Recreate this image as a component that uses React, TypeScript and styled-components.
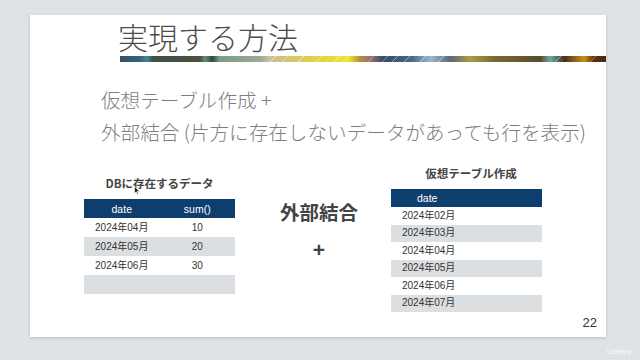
import React from 'react';
import styled, { createGlobalStyle } from 'styled-components';

const GlobalStyle = createGlobalStyle`
    html, body {
        margin: 0;
        padding: 0;
    }
    body {
        width: 640px;
        height: 360px;
        overflow: hidden;
        background: #dde3e7;
        font-family: "Noto Sans CJK JP", "Noto Sans", sans-serif;
    }
`;

const Stage = styled.div`
    position: relative;
    width: 640px;
    height: 360px;
    padding: 15px 0 0 30px;
    box-sizing: border-box;
`;

const Slide = styled.section`
    position: relative;
    width: 576px;
    height: 322px;
    background: #ffffff;
    box-shadow: 0 1px 3px rgba(0, 0, 0, 0.18);
    display: flex;
    flex-direction: column;
`;

const SlideTitle = styled.h1`
    margin: 0;
    padding: 3px 0 0 88px;
    font-size: 30px;
    line-height: 36px;
    font-weight: 300;
    color: #4d4d4d;
`;

const StripeWrap = styled.div`
    margin: 2px 0 0 90px;
    height: 6px;

    svg {
        display: block;
        width: 100%;
        height: 100%;
    }
`;

const Bullets = styled.ul`
    list-style: none;
    margin: 22px 0 0;
    padding: 0 0 0 71px;
`;

const Bullet = styled.li`
    font-size: 19.6px;
    line-height: 32px;
    font-weight: 300;
    color: #7d7d7d;
    white-space: nowrap;
`;

const ContentRow = styled.div`
    display: flex;
    align-items: flex-start;
    padding-left: 54px;
`;

const TableColumn = styled.div<{ $top: number }>`
    margin-top: ${(p) => p.$top}px;
    width: 151px;
    display: flex;
    flex-direction: column;
`;

const TableCaption = styled.div<{ $shift?: number }>`
    text-align: center;
    font-size: 11.5px;
    line-height: 16px;
    font-weight: 700;
    color: #444;
    margin-bottom: 8px;
    padding-left: ${(p) => p.$shift ?? 0}px;
    white-space: nowrap;
`;

const JoinColumn = styled.div`
    margin: 51px 33px 0 45px;
    width: 78px;
    display: flex;
    flex-direction: column;
    align-items: center;
    color: #444;
`;

const JoinLabel = styled.div`
    font-size: 19.5px;
    line-height: 26px;
    font-weight: 700;
    white-space: nowrap;
`;

const JoinPlus = styled.div`
    margin-top: 13px;
    font-family: "Liberation Sans", sans-serif;
    font-size: 21px;
    line-height: 24px;
    font-weight: 700;
`;

const DataTable = styled.table`
    width: 151px;
    border-collapse: collapse;
    table-layout: fixed;
    font-family: "Liberation Sans", "Noto Sans CJK JP", sans-serif;
`;

const HeadCell = styled.th<{ $align: 'center' | 'left'; $pad: number; $h: number }>`
    background: #0e3e6d;
    color: #ffffff;
    font-weight: 400;
    font-size: 10.5px;
    line-height: 12px;
    height: ${(p) => p.$h}px;
    padding: 0 0 0 ${(p) => p.$pad}px;
    text-align: ${(p) => p.$align};
`;

const BodyRow = styled.tr<{ $shaded: boolean }>`
    background: ${(p) => (p.$shaded ? '#dcdfe2' : '#ffffff')};
`;

const BodyCell = styled.td<{ $align: 'center' | 'left'; $pad: number; $h: number }>`
    font-size: 10px;
    line-height: 12px;
    color: #333;
    height: ${(p) => p.$h}px;
    padding: 0 0 0 ${(p) => p.$pad}px;
    text-align: ${(p) => p.$align};
    white-space: nowrap;
`;

const Footer = styled.div`
    margin-top: auto;
    padding: 0 9px 6px 0;
    text-align: right;
    font-family: "Liberation Sans", sans-serif;
    font-size: 13px;
    line-height: 16px;
    color: #333;
`;

const Cursor = styled.svg`
    position: absolute;
    left: 104px;
    top: 171px;
    width: 6px;
    height: 9px;
`;

const Watermark = styled.div`
    position: absolute;
    right: 8px;
    bottom: 4px;
    font-family: "Liberation Sans", sans-serif;
    font-size: 8px;
    color: rgba(255, 255, 255, 0.85);
`;

const stripeStops: [number, string][] = [
    [0, '#35506a'],
    [0.04, '#3a6078'],
    [0.055, '#3a8aa0'],
    [0.068, '#404e48'],
    [0.165, '#4a5040'],
    [0.175, '#6a8a78'],
    [0.19, '#2d4a3c'],
    [0.205, '#7f9a8a'],
    [0.29, '#98aa98'],
    [0.305, '#c8c098'],
    [0.37, '#d8c860'],
    [0.43, '#e8d840'],
    [0.47, '#f0e430'],
    [0.495, '#b88a40'],
    [0.515, '#a07070'],
    [0.54, '#3a4a68'],
    [0.6, '#4a6888'],
    [0.64, '#9ab8c8'],
    [0.68, '#5a6878'],
    [0.72, '#a8a040'],
    [0.77, '#7a6a30'],
    [0.865, '#5a4a30'],
    [0.885, '#70a8a8'],
    [0.915, '#4a3018'],
    [0.955, '#c89020'],
    [0.975, '#5a3010'],
    [1, '#4a2a10'],
];

const streaks: { x: number; c: string }[] = [
    { x: 150, c: '#ffffff' },
    { x: 162, c: '#f8f0c0' },
    { x: 178, c: '#ffffff' },
    { x: 196, c: '#fff8a0' },
    { x: 214, c: '#ffffff' },
    { x: 248, c: '#e8b0b0' },
    { x: 262, c: '#a8d0f0' },
    { x: 272, c: '#a8d0f0' },
    { x: 284, c: '#c0e0f0' },
    { x: 300, c: '#ffffff' },
    { x: 318, c: '#e0f0f8' },
    { x: 435, c: '#a0e0e0' },
    { x: 470, c: '#f0b030' },
];

const Stripe = () => (
    <svg viewBox="0 0 486 6" preserveAspectRatio="none">
        <defs>
            <linearGradient id="stripe" x1="0" x2="1" y1="0" y2="0">
                {stripeStops.map(([o, c]) => (
                    <stop key={o} offset={o} stopColor={c} />
                ))}
            </linearGradient>
        </defs>
        <rect width="486" height="6" fill="url(#stripe)" />
        {streaks.map((s) => (
            <line key={s.x} x1={s.x} y1="6" x2={s.x + 6} y2="0" stroke={s.c} strokeWidth="1" opacity="0.6" />
        ))}
    </svg>
);

const dbRows = [
    { date: '2024年04月', sum: '10' },
    { date: '2024年05月', sum: '20' },
    { date: '2024年06月', sum: '30' },
    { date: '', sum: '' },
];

const virtualRows = ['2024年02月', '2024年03月', '2024年04月', '2024年05月', '2024年06月', '2024年07月'];

export default function App() {
    return (
        <Stage>
            <GlobalStyle />
            <Slide>
                <SlideTitle>実現する方法</SlideTitle>
                <StripeWrap>
                    <Stripe />
                </StripeWrap>
                <Bullets>
                    <Bullet>仮想テーブル作成 +</Bullet>
                    <Bullet>外部結合 (片方に存在しないデータがあっても行を表示)</Bullet>
                </Bullets>
                <ContentRow>
                    <TableColumn $top={27}>
                        <TableCaption>DBに存在するデータ</TableCaption>
                        <DataTable>
                            <thead>
                                <tr>
                                    <HeadCell $align="center" $pad={0} $h={19}>date</HeadCell>
                                    <HeadCell $align="center" $pad={0} $h={19}>sum()</HeadCell>
                                </tr>
                            </thead>
                            <tbody>
                                {dbRows.map((r, i) => (
                                    <BodyRow key={i} $shaded={i % 2 === 1}>
                                        <BodyCell $align="center" $pad={0} $h={19}>{r.date}</BodyCell>
                                        <BodyCell $align="center" $pad={0} $h={19}>{r.sum}</BodyCell>
                                    </BodyRow>
                                ))}
                            </tbody>
                        </DataTable>
                    </TableColumn>
                    <JoinColumn>
                        <JoinLabel>外部結合</JoinLabel>
                        <JoinPlus>+</JoinPlus>
                    </JoinColumn>
                    <TableColumn $top={17}>
                        <TableCaption $shift={9}>仮想テーブル作成</TableCaption>
                        <DataTable>
                            <thead>
                                <tr>
                                    <HeadCell $align="left" $pad={26} $h={18}>date</HeadCell>
                                </tr>
                            </thead>
                            <tbody>
                                {virtualRows.map((d, i) => (
                                    <BodyRow key={d} $shaded={i % 2 === 1}>
                                        <BodyCell $align="left" $pad={11} $h={17.5}>{d}</BodyCell>
                                    </BodyRow>
                                ))}
                            </tbody>
                        </DataTable>
                    </TableColumn>
                </ContentRow>
                <Footer>22</Footer>
                <Cursor viewBox="0 0 6 9">
                    <path d="M0.5 0.5 L0.5 7.5 L2.2 5.8 L3.4 8.5 L4.4 8 L3.3 5.4 L5.5 5.4 Z" fill="#222" stroke="#fff" strokeWidth="0.6" />
                </Cursor>
            </Slide>
            <Watermark>Udemy</Watermark>
        </Stage>
    );
}
